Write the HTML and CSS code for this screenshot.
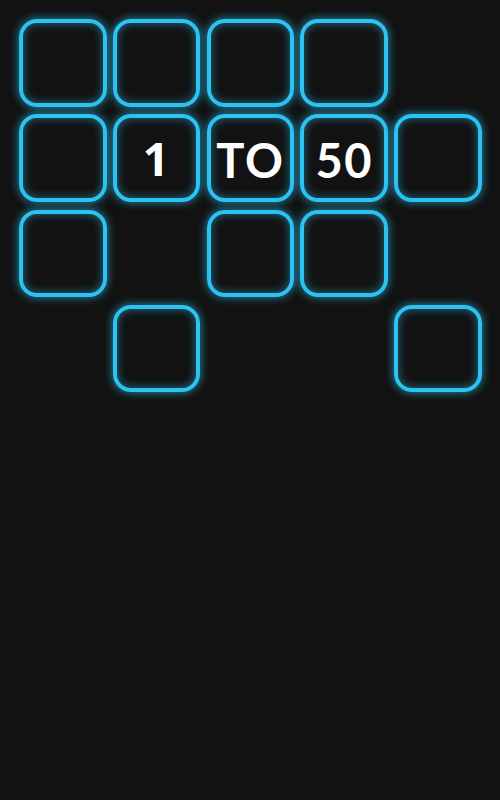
FILE: index.html
```html
<!DOCTYPE html>
<html>
<head>
<meta charset="utf-8">
<link rel="stylesheet" href="styles.css">
</head>
<body>
<div class="board">
  <div class="cell"></div>
  <div class="cell"></div>
  <div class="cell"></div>
  <div class="cell"></div>
  <div class="cell empty"></div>

  <div class="cell"></div>
  <div class="cell"><span class="label digit-one">1</span></div>
  <div class="cell"><span class="label">TO</span></div>
  <div class="cell"><span class="label">50</span></div>
  <div class="cell"></div>

  <div class="cell"></div>
  <div class="cell empty"></div>
  <div class="cell"></div>
  <div class="cell"></div>
  <div class="cell empty"></div>

  <div class="cell empty"></div>
  <div class="cell"></div>
  <div class="cell empty"></div>
  <div class="cell empty"></div>
  <div class="cell"></div>
</div>
</body>
</html>
```
FILE: styles.css
```css
html, body {
  margin: 0;
  padding: 0;
  background: #121212;
  width: 500px;
  height: 800px;
  overflow: hidden;
}
.board {
  display: grid;
  grid-template-columns: repeat(5, 87.5px);
  grid-auto-rows: 87.5px;
  column-gap: 6.3px;
  row-gap: 7.8px;
  padding: 19px 0 0 19px;
}
.cell {
  box-sizing: border-box;
  border: 4.5px solid #2cc3f3;
  border-radius: 18px;
  box-shadow: 0 0 8px 1px rgba(44, 195, 243, 0.6), inset 0 0 8px 1px rgba(44, 195, 243, 0.45);
  display: flex;
  align-items: center;
  justify-content: center;
}
.cell.empty {
  visibility: hidden;
}
.label {
  font-family: "Lato", "DejaVu Sans", sans-serif;
  font-weight: 700;
  font-size: 47px;
  color: #ffffff;
  line-height: 1;
  letter-spacing: 1.5px;
  padding-top: 4px;
}
.digit-one {
  font-family: "Open Sans", "Lato", sans-serif;
  font-size: 46px;
  padding-top: 0;
  margin-top: -1px;
}
```
